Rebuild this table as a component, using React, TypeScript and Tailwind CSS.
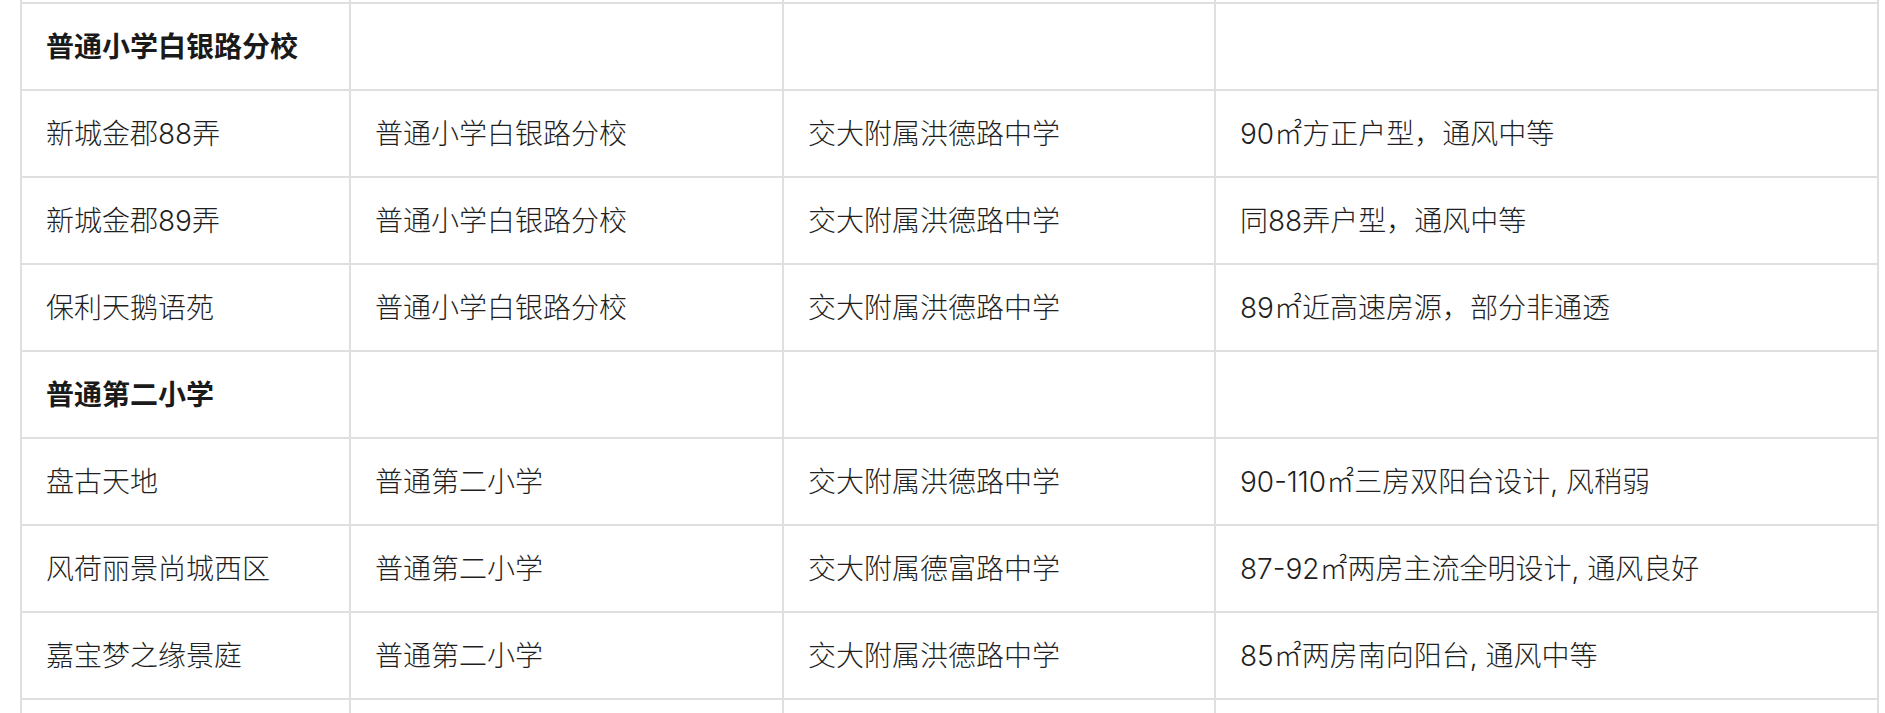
import React from 'react';

type Row =
  | { kind: 'group'; name: string }
  | { kind: 'item'; cells: [string, string, string, string] };

const rows: Row[] = [
  { kind: 'group', name: '普通小学白银路分校' },
  { kind: 'item', cells: ['新城金郡88弄', '普通小学白银路分校', '交大附属洪德路中学', '90㎡方正户型，通风中等'] },
  { kind: 'item', cells: ['新城金郡89弄', '普通小学白银路分校', '交大附属洪德路中学', '同88弄户型，通风中等'] },
  { kind: 'item', cells: ['保利天鹅语苑', '普通小学白银路分校', '交大附属洪德路中学', '89㎡近高速房源，部分非通透'] },
  { kind: 'group', name: '普通第二小学' },
  { kind: 'item', cells: ['盘古天地', '普通第二小学', '交大附属洪德路中学', '90-110㎡三房双阳台设计, 风稍弱'] },
  { kind: 'item', cells: ['风荷丽景尚城西区', '普通第二小学', '交大附属德富路中学', '87-92㎡两房主流全明设计, 通风良好'] },
  { kind: 'item', cells: ['嘉宝梦之缘景庭', '普通第二小学', '交大附属洪德路中学', '85㎡两房南向阳台, 通风中等'] },
];

const Cell: React.FC<{ children?: React.ReactNode; bold?: boolean }> = ({ children, bold }) => (
  <div
    className={
      'flex h-[87px] items-center border-r-2 border-b-2 border-[#dfdfdf] pl-6 whitespace-nowrap ' +
      (bold ? 'font-bold text-[#1a1a1a]' : 'font-light text-[#1f1f1f]')
    }
  >
    {children}
  </div>
);

const EmptyRow = () => (
  <>
    <Cell />
    <Cell />
    <Cell />
    <Cell />
  </>
);

export default function App() {
  return (
    <div className="h-[713px] overflow-hidden bg-white">
      {/* table is scrolled: the row above is mostly out of view */}
      <div
        className="ml-[20px] -mt-[83px] grid w-[1859px] grid-cols-[329px_433px_432px_663px] border-l-2 border-[#dfdfdf] text-[28px] leading-none"
        style={{ fontFamily: 'Inter, "Noto Sans CJK SC", sans-serif' }}
      >
        <EmptyRow />
        {rows.map((row, i) =>
          row.kind === 'group' ? (
            <React.Fragment key={i}>
              <Cell bold>{row.name}</Cell>
              <Cell />
              <Cell />
              <Cell />
            </React.Fragment>
          ) : (
            <React.Fragment key={i}>
              {row.cells.map((text, j) => (
                <Cell key={j}>{text}</Cell>
              ))}
            </React.Fragment>
          )
        )}
        <EmptyRow />
      </div>
    </div>
  );
}
